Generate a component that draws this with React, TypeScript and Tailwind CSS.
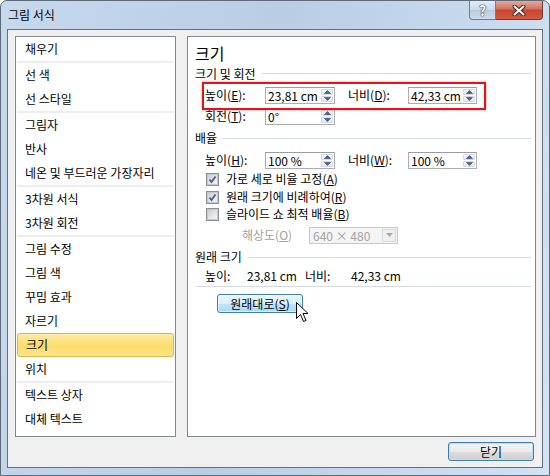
const groups: string[][] = [
  ["채우기"],
  ["선 색", "선 스타일"],
  ["그림자", "반사", "네온 및 부드러운 가장자리"],
  ["3차원 서식", "3차원 회전"],
  ["그림 수정", "그림 색", "꾸밈 효과", "자르기", "크기", "위치"],
  ["텍스트 상자", "대체 텍스트"],
];

function Arrow({ up }: { up?: boolean }) {
  return (
    <svg width="7" height="4" viewBox="0 0 7 4" className="block">
      <path d={up ? "M0.5 3.5 L3.5 0.5 L6.5 3.5 Z" : "M0.5 0.5 L3.5 3.5 L6.5 0.5 Z"} fill="#4c6185" stroke="#4c6185" strokeWidth="0.8" strokeLinejoin="round" />
    </svg>
  );
}

function Spin({ value, w }: { value: string; w: string }) {
  return (
    <div className={`flex h-[17px] ${w} border border-[#abadb3] border-t-[#9a9ca2] bg-white`}>
      <div className="flex-1 pl-[2px] leading-[15px] text-[12px]">{value}</div>
      <div className="flex w-[14px] flex-col gap-px p-px">
        <div className="flex flex-1 items-center justify-center rounded-[1px] border border-[#d5dae2] bg-[linear-gradient(#f3f5f8,#e2e7ef)]">
          <Arrow up />
        </div>
        <div className="flex flex-1 items-center justify-center rounded-[1px] border border-[#d5dae2] bg-[linear-gradient(#f3f5f8,#e2e7ef)]">
          <Arrow />
        </div>
      </div>
    </div>
  );
}

function Section({ title, h }: { title: string; h: string }) {
  return (
    <div className={`flex ${h} items-center gap-[6px] pl-[7px] pr-[4px]`}>
      <span>{title}</span>
      <div className="h-px flex-1 bg-[#d6dbe1]" />
    </div>
  );
}

function Check({ checked, label }: { checked: boolean; label: React.ReactNode }) {
  return (
    <div className="flex h-full items-center pl-[18px]">
      <div className="flex h-[13px] w-[13px] items-center justify-center border border-[#8e8f8f] bg-white">
        <div className="flex h-[11px] w-[11px] items-center justify-center border border-[#c3c8cf] bg-[linear-gradient(135deg,#cbd0d6,#f5f6f7)]">
          {checked && (
            <svg width="9" height="9" viewBox="0 0 9 9">
              <path d="M1.5 4.5 L3.5 7 L7.5 1.5" fill="none" stroke="#4a5f97" strokeWidth="1.8" />
            </svg>
          )}
        </div>
      </div>
      <span className="ml-[7px]">{label}</span>
    </div>
  );
}

export default function App() {
  return (
    <div className="relative h-[476px] w-[550px] overflow-hidden rounded-t-[7px] border border-[#5c6a7a] bg-[linear-gradient(100deg,#c6d8ec_0%,#b9cee4_45%,#c4d7eb_70%,#d3e2f2_100%)] font-['Noto_Sans_CJK_KR',sans-serif] text-[12px] text-black">
      {/* title bar */}
      <div className="flex h-[28px] items-center pl-[7px] pb-[1px] text-[12px]">그림 서식</div>
      <div className="absolute right-[6px] top-0 flex h-[19px]">
        <div className="flex w-[27px] items-center justify-center rounded-bl-[4px] border border-t-0 border-[#6f7e90] bg-[linear-gradient(#e4ecf5,#c9d8e9_50%,#b8cadf_51%,#cfdcea)]">
          <span className="text-[14px] font-bold leading-none text-white [text-shadow:0_0_1px_#333,0_0_1px_#333,0_0_1px_#333]">?</span>
        </div>
        <div className="flex w-[47px] items-center justify-center rounded-br-[4px] border border-l-0 border-t-0 border-[#6e3a33] bg-[linear-gradient(#e9a99b,#d2705c_45%,#c7452f_50%,#d75a3f_100%)]">
          <svg width="14" height="11" viewBox="0 0 14 11">
            <path d="M2.5 1.5 L11.5 9.5 M11.5 1.5 L2.5 9.5" stroke="#3c2a2a" strokeWidth="4" strokeLinecap="round" />
            <path d="M2.5 1.5 L11.5 9.5 M11.5 1.5 L2.5 9.5" stroke="#ffffff" strokeWidth="2" strokeLinecap="round" />
          </svg>
        </div>
      </div>

      {/* content */}
      <div className="ml-[6px] h-[439px] w-[536px] border border-[#61707f] bg-[#f0f0f0] pl-[7px] pr-[6px] pt-[6px]">
        <div className="flex h-[401px] gap-[11px]">
          {/* left list */}
          <div className="h-full w-[161px] border border-[#828790] bg-white">
            {groups.map((g, gi) => (
              <div key={gi}>
                {gi > 0 && <div className="mx-px h-[2px] bg-[#eceef4]" />}
                {g.map((item) =>
                  item === "크기" ? (
                    <div key={item} className="mx-px flex h-[24px] items-center rounded-[3px] border border-[#e0b44d] bg-[linear-gradient(#fdeca6,#fddc6b_55%,#fde48a)] pl-[8px]">
                      {item}
                    </div>
                  ) : (
                    <div key={item} className="flex h-[24px] items-center pl-[9px]">
                      {item}
                    </div>
                  )
                )}
              </div>
            ))}
          </div>

          {/* right panel */}
          <div className="relative h-full w-[349px] border border-[#828790] bg-white">
            <div className="mt-[6px] flex h-[20px] items-center pl-[7px] text-[16px]">크기</div>
            <Section title="크기 및 회전" h="h-[21px]" />
            <div className="flex h-[22px] items-center pl-[17px]">
              <span className="w-[60px]">높이(<u>E</u>):</span>
              <Spin value="23,81 cm" w="w-[70px]" />
              <span className="ml-[13px] w-[60px]">너비(<u>D</u>):</span>
              <Spin value="42,33 cm" w="w-[69px]" />
            </div>
            <div className="flex h-[20px] items-center pl-[17px]">
              <span className="w-[60px]">회전(<u>T</u>):</span>
              <Spin value="0°" w="w-[70px]" />
            </div>
            <Section title="배율" h="h-[24px]" />
            <div className="flex h-[20px] items-center pl-[17px]">
              <span className="w-[60px]">높이(<u>H</u>):</span>
              <Spin value="100 %" w="w-[70px]" />
              <span className="ml-[13px] w-[60px]">너비(<u>W</u>):</span>
              <Spin value="100 %" w="w-[69px]" />
            </div>
            <div className="h-[18px]">
              <Check checked label={<>가로 세로 비율 고정(<u>A</u>)</>} />
            </div>
            <div className="h-[18px]">
              <Check checked label={<>원래 크기에 비례하여(<u>R</u>)</>} />
            </div>
            <div className="h-[16px]">
              <Check checked={false} label={<>슬라이드 쇼 최적 배율(<u>B</u>)</>} />
            </div>
            <div className="flex h-[26px] items-center pl-[54px]">
              <span className="w-[67px] text-[#a0a0a0]">해상도(<u>O</u>)</span>
              <div className="flex h-[17px] w-[89px] border border-[#c9c9c9] bg-[#f4f4f4]">
                <div className="flex-1 pl-[3px] leading-[15px] text-[#a3a3a3]">640 × 480</div>
                <div className="m-px flex w-[14px] items-center justify-center border border-[#d9d9d9] bg-[#f0f0f0]">
                  <svg width="7" height="4" viewBox="0 0 7 4">
                    <path d="M0 0 L7 0 L3.5 4 Z" fill="#a8a8a8" />
                  </svg>
                </div>
              </div>
            </div>
            <Section title="원래 크기" h="h-[18px]" />
            <div className="flex h-[20px] items-center pl-[17px]">
              <span className="w-[42px]">높이:</span>
              <span className="w-[58px]">23,81 cm</span>
              <span className="w-[46px]">너비:</span>
              <span>42,33 cm</span>
            </div>
            <div className="ml-[8px] mr-[4px] h-px bg-[#d6dbe1]" />
            <div className="ml-[29px] mt-[7px] flex h-[19px] w-[86px] items-center justify-center rounded-[3px] border border-[#3c7fb1] bg-[linear-gradient(#eaf6fd,#d9f0fc_50%,#bee6fd_51%,#a7d9f5)] shadow-[inset_0_0_0_1px_rgba(255,255,255,0.6)]">
              원래대로(<u>S</u>)
            </div>

            {/* red highlight */}
            <div className="pointer-events-none absolute left-[14px] top-[45px] h-[28px] w-[284px] border-2 border-[#e3131c] shadow-[0_0_2px_rgba(255,60,60,0.6)]" />

            {/* mouse cursor */}
            <svg className="absolute left-[108px] top-[265px]" width="13" height="21" viewBox="0 0 13 21">
              <path d="M0.5 0.5 L0.5 16.5 L4.5 12.5 L7.5 19.5 L10 18.5 L7 11.5 L12 11.5 Z" fill="#ffffff" stroke="#000000" strokeWidth="1" strokeLinejoin="miter" />
            </svg>
          </div>
        </div>

        <div className="mt-[5px] flex justify-end pr-[2px]">
          <div className="flex h-[19px] w-[86px] items-center justify-center rounded-[3px] border border-[#3c7fb1] bg-[linear-gradient(#f2f2f2,#ebebeb_50%,#dddddd_51%,#cfcfcf)] shadow-[inset_0_0_0_1px_#b8e0f8]">
            닫기
          </div>
        </div>
      </div>
    </div>
  );
}
